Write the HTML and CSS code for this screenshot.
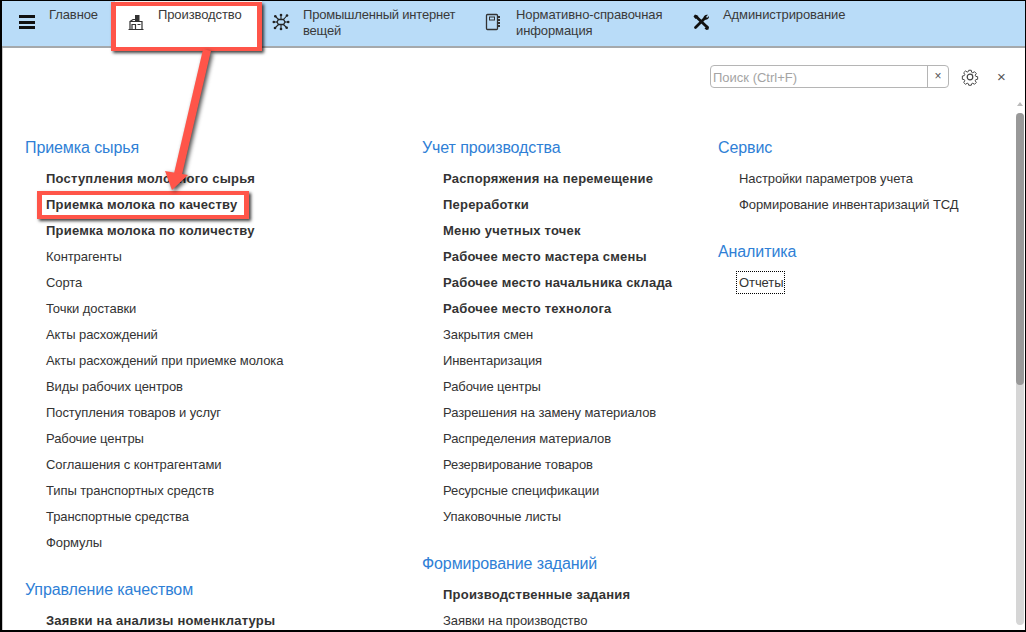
FILE: index.html
```html
<!DOCTYPE html>
<html lang="ru">
<head>
<meta charset="utf-8">
<title>Производство</title>
<link rel="stylesheet" href="styles.css">
</head>
<body>
<div class="frame">
  <nav class="topbar">
    <button class="burger" aria-label="Меню"><span></span><span></span><span></span></button>
    <div class="tab tab-main"><span class="tab-label">Главное</span></div>
    <div class="tab tab-prod active">
      <svg class="tab-icon" viewBox="0 0 16 16" width="16" height="16"><path d="M.5 15.500h15M2 15V7.500h12V15M2 7.500 5 5.500h2M4 15v-4.500h3.500V15M9.500 10.500h3" fill="none" stroke="#333" stroke-width="1.200"/><rect x="7" y="1" width="4.500" height="6.500" fill="#333"/></svg>
      <span class="tab-label">Производство</span>
    </div>
    <div class="tab tab-iot">
      <svg class="tab-icon" viewBox="0 0 18 18" width="18" height="18"><g stroke="#222" stroke-width="1.100" fill="none"><path d="M6.500 6.500h5L13 9l-1.500 2.500h-5L5 9Z" stroke-width="1.300"/><path d="M9 2v4M9 12v4M1.500 9h3.500M13 9h3.500M3.500 3.500 6.500 6.500M15 2.500 11.500 6.500M3 15 6.500 11.500M14.500 14.500 11.500 11.500"/></g><g fill="#222"><circle cx="9" cy="2" r="1.300"/><circle cx="9" cy="16" r="1.300"/><circle cx="1.800" cy="9" r="1.300"/><circle cx="16.200" cy="9" r="1.300"/><circle cx="3.300" cy="3.300" r="1.300"/><circle cx="15" cy="2.500" r="1.300"/><circle cx="3" cy="15" r="1.300"/><circle cx="14.700" cy="14.700" r="1.300"/></g></svg>
      <span class="tab-label tab-label-tight">Промышленный интернет<br>вещей</span>
    </div>
    <div class="tab tab-nsi">
      <svg class="tab-icon" viewBox="0 0 16 18" width="16" height="18"><rect x="1.500" y="1.500" width="11" height="15" rx="1" fill="none" stroke="#333" stroke-width="1.300"/><rect x="4.500" y="4" width="5" height="3" fill="none" stroke="#333"/><path d="M14 3v12" stroke="#333" stroke-width="2" stroke-dasharray="2 1"/></svg>
      <span class="tab-label">Нормативно-справочная<br>информация</span>
    </div>
    <div class="tab tab-admin">
      <svg class="tab-icon" viewBox="0 0 18 18" width="18" height="18"><g fill="none" stroke="#111" stroke-linecap="round"><path d="M4 3.500 15 14" stroke-width="2.800"/><path d="M3.500 14.500 13 5" stroke-width="2.800"/></g><path d="M1.500 3.500 3 1.500 6.500 3 3.500 6ZM11.500 5C11.500 2.800 13.500 1.200 16 1.800L14 4 15 5 17 3C17.300 5.500 15.500 7 13 6.800ZM12.500 15.500 15.500 12.500 17 14 16.500 16.500 14.500 17Z" fill="#111"/></svg>
      <span class="tab-label">Администрирование</span>
    </div>
  </nav>
  <main class="content">
    <div class="toolbar">
      <div class="search">
        <span class="search-input">Поиск (Ctrl+F)</span>
        <span class="search-clear">×</span>
      </div>
      <svg class="gear" viewBox="0 0 18 18" width="18" height="18"><path d="M7.600 1.500h2.800l.4 2.200 1.300.6 1.900-1.200 2 2-1.200 1.900.6 1.300 2.100.4v2.800l-2.100.4-.6 1.300 1.200 1.900-2 2-1.900-1.200-1.300.6-.4 1.700H7.600l-.4-1.700-1.300-.6-1.900 1.200-2-2 1.200-1.900-.6-1.300-2.100-.4V7.900l2.100-.4.6-1.300L2 4.300l2-2 1.900 1.200 1.300-.6Z" transform="translate(.9 .9) scale(.9)" fill="none" stroke="#444" stroke-width="1.100"/><circle cx="9" cy="9" r="2.800" fill="none" stroke="#444" stroke-width="1.200"/></svg>
      <span class="close">×</span>
    </div>
    <div class="columns">
      <div class="col col-1">
        <section class="group">
          <h2>Приемка сырья</h2>
          <a class="b">Поступления молочного сырья</a>
          <a class="b">Приемка молока по качеству</a>
          <a class="b">Приемка молока по количеству</a>
          <a>Контрагенты</a>
          <a>Сорта</a>
          <a>Точки доставки</a>
          <a>Акты расхождений</a>
          <a>Акты расхождений при приемке молока</a>
          <a>Виды рабочих центров</a>
          <a>Поступления товаров и услуг</a>
          <a>Рабочие центры</a>
          <a>Соглашения с контрагентами</a>
          <a>Типы транспортных средств</a>
          <a>Транспортные средства</a>
          <a>Формулы</a>
        </section>
        <section class="group">
          <h2>Управление качеством</h2>
          <a class="b">Заявки на анализы номенклатуры</a>
        </section>
      </div>
      <div class="col col-2">
        <section class="group">
          <h2>Учет производства</h2>
          <a class="b">Распоряжения на перемещение</a>
          <a class="b">Переработки</a>
          <a class="b">Меню учетных точек</a>
          <a class="b">Рабочее место мастера смены</a>
          <a class="b">Рабочее место начальника склада</a>
          <a class="b">Рабочее место технолога</a>
          <a>Закрытия смен</a>
          <a>Инвентаризация</a>
          <a>Рабочие центры</a>
          <a>Разрешения на замену материалов</a>
          <a>Распределения материалов</a>
          <a>Резервирование товаров</a>
          <a>Ресурсные спецификации</a>
          <a>Упаковочные листы</a>
        </section>
        <section class="group">
          <h2>Формирование заданий</h2>
          <a class="b">Производственные задания</a>
          <a>Заявки на производство</a>
        </section>
      </div>
      <div class="col col-3">
        <section class="group">
          <h2>Сервис</h2>
          <a>Настройки параметров учета</a>
          <a>Формирование инвентаризаций ТСД</a>
        </section>
        <section class="group">
          <h2>Аналитика</h2>
          <a><span class="focus">Отчеты</span></a>
        </section>
      </div>
    </div>
    <div class="scrollbar"><i class="arrow"></i><div class="track"><div class="thumb"></div></div></div>
  </main>
  <div class="mark mark-tab"></div>
  <div class="mark mark-row"></div>
  <svg class="pointer" viewBox="0 0 1026 632" width="1026" height="632"><path d="M207 50 178 174" stroke="#ff5549" stroke-width="8" fill="none"/><path d="M165 171 172 190 188 175Z" fill="#ff5549"/></svg>
</div>
</body>
</html>
```
FILE: styles.css
```css
* { box-sizing: border-box; }
html, body { margin: 0; height: 100%; overflow: hidden; }
body { width: 1026px; height: 632px; background: #fff; font-family: "Liberation Sans", Arial, sans-serif; font-size: 13px; color: #333; }
.frame { position: relative; width: 1026px; height: 632px; border: 1px solid #000; border-left-width: 2px; border-bottom-width: 2px; display: flex; flex-direction: column; overflow: hidden; }
.topbar { flex: none; height: 47px; background: #b9dcf8; border-bottom: 2px solid #a5a9ac; display: flex; align-items: flex-start; }
.burger { width: 16px; height: 14px; margin: 14px 0 0 17px; padding: 0; border: 0; background: none; display: flex; flex-direction: column; justify-content: space-between; }
.burger span { display: block; height: 3px; background: #111; }
.tab { display: flex; align-items: flex-start; line-height: 16px; letter-spacing: -.1px; color: #3a3a3a; }
.tab-label { padding-top: 6px; white-space: nowrap; }
.tab-label-tight { letter-spacing: -.2px; }
.tab-main { margin-left: 14px; width: 67px; }
.tab-prod { width: 147px; height: 46px; background: #fff; padding-left: 13px; margin-left: -1px; }
.tab-prod .tab-icon { margin: 13px 14px 0 0; }
.tab-iot { padding-left: 1px; margin-left: 9px; width: 214px; }
.tab-iot .tab-icon { margin: 12px 13px 0 0; }
.tab-nsi { padding-left: 0; width: 207px; }
.tab-nsi .tab-icon { margin: 12px 15px 0 0; }
.tab-admin .tab-icon { margin: 12px 13px 0 0; }
.content { position: relative; flex: 1; min-height: 0; border-left: 1px solid #c9c9c9; }
.toolbar { position: absolute; top: 17px; left: 707px; display: flex; align-items: center; }
.search { display: flex; width: 239px; height: 23px; border: 1px solid #b5b5b5; border-radius: 4px; background: #fff; }
.search-input { flex: 1; border-right: 1px solid #b5b5b5; padding-left: 2px; line-height: 23px; color: #a4a4a4; }
.search-clear { width: 20px; text-align: center; line-height: 21px; font-size: 12px; color: #555; }
.gear { margin-left: 12px; }
.close { margin-left: 18px; font-size: 15px; line-height: 18px; color: #555; }
.columns { display: flex; height: 100%; padding-top: 87px; overflow: hidden; }
.col-1 { margin-left: 22px; width: 397px; }
.col-2 { width: 296px; }
.group { margin-bottom: 21px; }
.group h2 { margin: 0 0 5px; height: 26px; line-height: 26px; font-size: 16px; font-weight: 400; letter-spacing: -.1px; color: #2f7fd6; }
.group a { display: block; height: 26px; line-height: 26px; padding-left: 21px; letter-spacing: -.08px; white-space: nowrap; color: #333; }
.group a.b { font-weight: 700; letter-spacing: .22px; }
.focus { outline: 1px dotted #000; padding: 3px 1px 3px 2px; margin-left: -2px; }
.scrollbar { position: absolute; top: 54px; right: 1px; bottom: 5px; width: 8px; display: flex; flex-direction: column; align-items: center; }
.arrow { width: 0; height: 0; border: 3px solid transparent; border-top: 0; border-bottom: 4px solid #bbb; margin-bottom: 7px; }
.track { flex: 1; width: 8px; background: #d6d6d6; border-radius: 4px; }
.thumb { height: 272px; background: #999; border-radius: 4px; }
.mark { position: absolute; border-style: solid; border-color: #ff5549; border-width: 4px 5px; box-shadow: 2px 2px 3px rgba(0,0,0,.75); pointer-events: none; }
.mark-tab { left: 109px; top: 1px; width: 151px; height: 49px; }
.mark-row { left: 35px; top: 190px; width: 212px; height: 28px; }
.pointer { position: absolute; left: -2px; top: -1px; filter: drop-shadow(2px 2px 2px rgba(0,0,0,.7)); pointer-events: none; }
```
